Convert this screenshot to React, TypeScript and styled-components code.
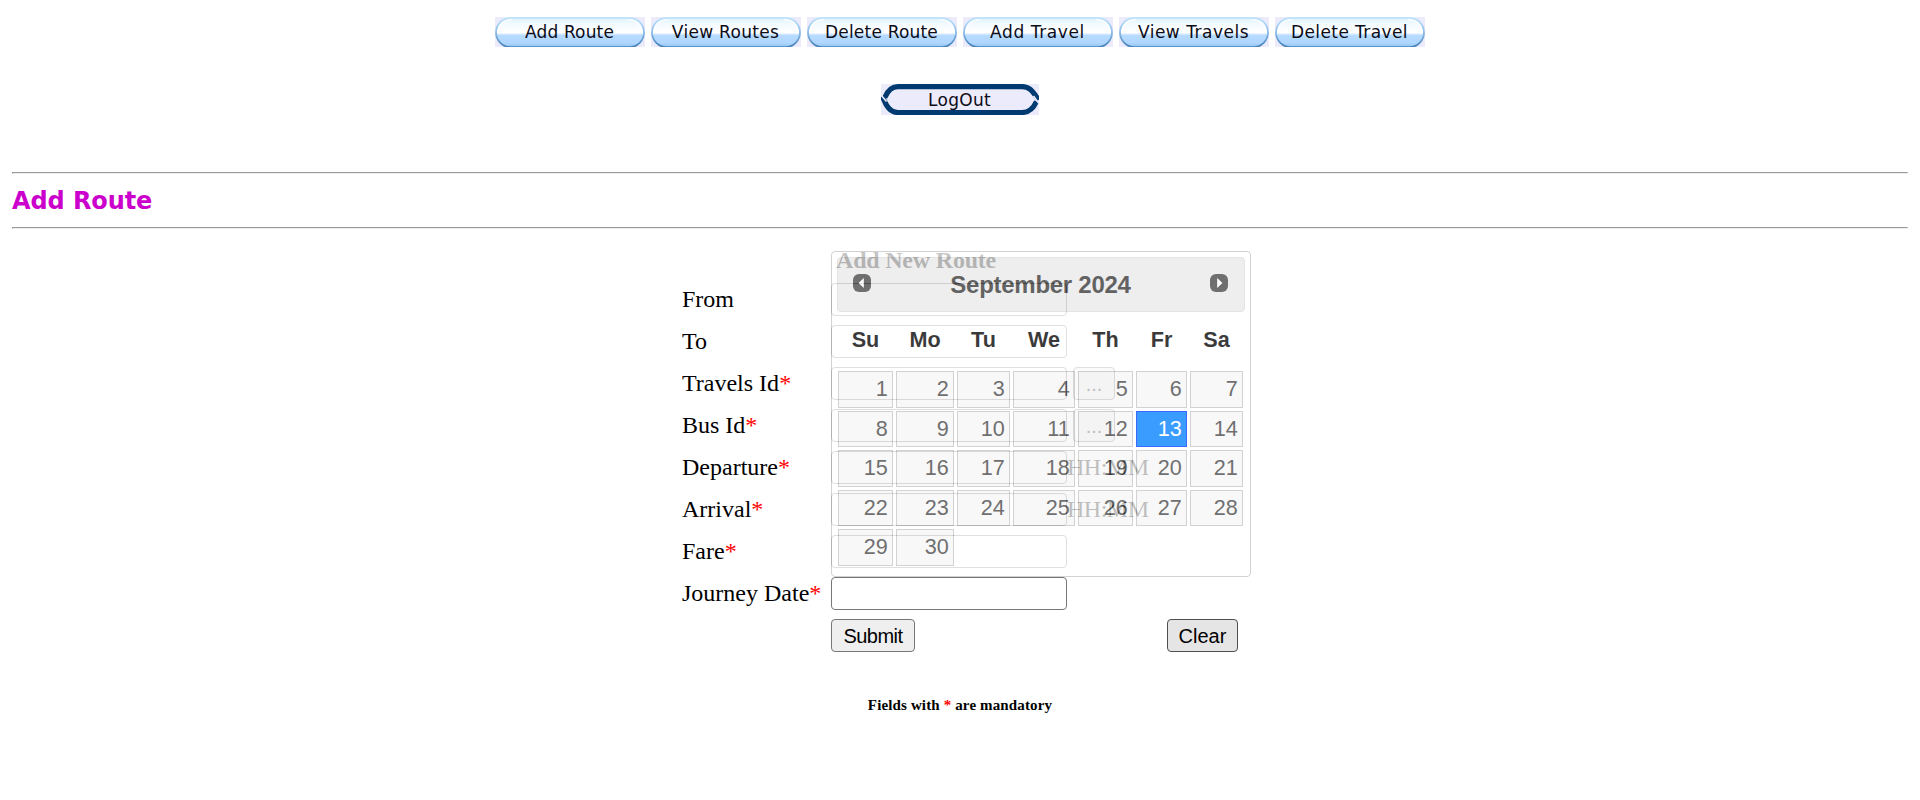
import React from 'react';
import styled, { createGlobalStyle } from 'styled-components';

const GlobalStyle = createGlobalStyle`
  * { box-sizing: border-box; }
  body { margin: 0; background: #fff; color: #000; font: 24px/27px "Liberation Serif", "Times New Roman", serif; }
`;

const Page = styled.main`
  display: flex;
  flex-direction: column;
  height: 800px;
  padding: 17px 12px 0;
  overflow: hidden;
`;

const NavBar = styled.nav`
  display: flex;
  justify-content: center;
  gap: 6px;
`;

const ImageButton = styled.button<{ $w: number; $h: number }>`
  position: relative;
  width: ${p => p.$w}px;
  height: ${p => p.$h}px;
  padding: 0;
  border: 0;
  background: #ecebfb;
  svg { position: absolute; inset: 0; }
`;

const ButtonText = styled.span<{ $spacing?: number }>`
  position: relative;
  display: block;
  padding-right: 1px;
  font: 17px/28px "DejaVu Sans", Verdana, sans-serif;
  letter-spacing: ${p => p.$spacing ?? 0}px;
  color: #0c0c18;
  white-space: nowrap;
`;

const LogoutRow = styled.div`
  display: flex;
  justify-content: center;
  margin: 37px 0 57px;
`;

const Rule = styled.hr`
  width: 100%;
  height: 2px;
  margin: 0;
  border: 1px solid;
  border-color: #9a9a9a #eee #eee #9a9a9a;
`;

const Heading = styled.h1`
  height: 53px;
  margin: 0;
  padding-top: 1px;
  font: bold 24px/53px "DejaVu Sans", Verdana, sans-serif;
  letter-spacing: -0.1px;
  color: #c0c;
`;

const RouteForm = styled.form`
  position: relative;
  display: grid;
  grid-template-columns: 149px 1fr;
  grid-auto-rows: 33px;
  row-gap: 9px;
  width: 556px;
  margin: 12px auto 0;
`;

const FormTitle = styled.div`
  grid-column: 2;
  padding: 6px 0 0 5px;
  font-weight: bold;
  letter-spacing: -0.2px;
`;

const Label = styled.label`
  padding-top: 3px;
  white-space: nowrap;
`;

const Star = styled.span`
  color: red;
`;

const Field = styled.div`
  display: flex;
`;

const TextInput = styled.input`
  width: 236px;
  height: 33px;
  border: 1px solid #767676;
  border-radius: 4px;
  background: #fff;
`;

const FormButton = styled.button<{ $w: number; $hover?: boolean; $spacing?: number }>`
  width: ${p => p.$w}px;
  height: 33px;
  padding: 0;
  border: 1px solid ${p => (p.$hover ? '#4f4f4f' : '#767676')};
  border-radius: 4px;
  background: ${p => (p.$hover ? '#e5e5e5' : '#efefef')};
  font: 20px/30px "Liberation Sans", Arial, sans-serif;
  letter-spacing: ${p => p.$spacing ?? 0}px;
  color: #000;
`;

const LookupButton = styled(FormButton)`
  margin-left: 6px;
`;

const Hint = styled.span`
  padding-top: 3px;
  letter-spacing: -0.5px;
`;

const Actions = styled.div`
  grid-column: 2;
  display: flex;
  justify-content: space-between;
`;

const Note = styled.p`
  margin: 43px 0 0;
  font-size: 15px;
  line-height: 20px;
  font-weight: bold;
  letter-spacing: 0.14px;
  text-align: center;
`;

const Calendar = styled.div`
  position: absolute;
  left: 149px;
  top: 10px;
  width: 420px;
  height: 326px;
  padding: 5px;
  border: 1px solid #c5c5c5;
  border-radius: 4px;
  background: #fff;
  opacity: 0.77;
  font-family: "Liberation Sans", Arial, sans-serif;
`;

const CalendarHeader = styled.div`
  display: flex;
  justify-content: space-between;
  height: 55px;
  padding: 16px 16px 0 15px;
  border: 1px solid #ddd;
  border-radius: 4px;
  background: #e9e9e9;
`;

const MonthTitle = styled.div`
  font-size: 24px;
  line-height: 22px;
  font-weight: bold;
  letter-spacing: -0.27px;
  color: #333;
`;

const columns = '55px 58px 53px 62px 55px 51px 53px';

const WeekHead = styled.div`
  display: grid;
  grid-template-columns: ${columns};
  column-gap: 3px;
  height: 59px;
  padding: 15px 0 0 1px;
  font-size: 21.6px;
  line-height: 26px;
  font-weight: bold;
  text-align: center;
  color: #000;
`;

const Days = styled.div`
  display: grid;
  grid-template-columns: ${columns};
  grid-auto-rows: 36.6px;
  gap: 3px;
  padding-left: 1px;
`;

const Day = styled.div<{ $active: boolean }>`
  padding: 4px 4.3px 0 0;
  border: 1px solid ${p => (p.$active ? '#003eff' : '#c5c5c5')};
  background: ${p => (p.$active ? '#007fff' : '#f6f6f6')};
  color: ${p => (p.$active ? '#fff' : '#454545')};
  font-size: 21.6px;
  line-height: 25px;
  text-align: right;
`;

const GlossyPill = ({ id }: { id: string }) => (
  <svg width="150" height="30" viewBox="0 0 150 30">
    <defs>
      <linearGradient id={`${id}f`} x1="0" y1="0" x2="0" y2="1">
        <stop offset="0" stopColor="#dcf1fd" />
        <stop offset=".2" stopColor="#f2faff" />
        <stop offset=".5" stopColor="#fff" />
        <stop offset=".6" stopColor="#b8dbff" />
        <stop offset=".85" stopColor="#aed6ff" />
        <stop offset="1" stopColor="#94c2f2" />
      </linearGradient>
      <linearGradient id={`${id}s`} x1="0" y1="0" x2="0" y2="1">
        <stop offset="0" stopColor="#bfe4f8" />
        <stop offset=".5" stopColor="#86b9e8" />
        <stop offset="1" stopColor="#4480b8" />
      </linearGradient>
    </defs>
    <rect x="1" y=".8" width="148" height="29.4" rx="14.7" fill={`url(#${id}f)`} stroke={`url(#${id}s)`} strokeWidth="1.7" />
    <path d="M3 15C4 7 9 3 17 2.5M147 15C146 7 141 3 133 2.5" fill="none" stroke="#fff" strokeWidth="1.5" opacity=".7" />
  </svg>
);

const LogoutFrame = () => (
  <svg width="158" height="31" viewBox="0 0 158 31">
    <path d="M3.8 13.5C7 6 11 2.7 17 2.7H141C148 2.7 151 6 157.5 16" fill="none" stroke="#003a70" strokeWidth="5.2" />
    <path d="M1.5 12.5C5 22 9 28.5 17 28.5H141C149 28.5 153 23 155.5 17.5" fill="none" stroke="#003a70" strokeWidth="5.2" />
    <path d="M0 11L5.5 17.5M152.5 12L158 19.5" stroke="#ecebfb" strokeWidth="1.6" />
  </svg>
);

const ArrowIcon = ({ next }: { next?: boolean }) => (
  <svg width="18" height="18" viewBox="0 0 18 18">
    <rect width="18" height="18" rx="6" fill="#444" />
    <path d={next ? 'M7.2 4L12.4 9L7.2 14Z' : 'M10.8 4L5.6 9L10.8 14Z'} fill="#fff" />
  </svg>
);

const navItems: [string, number][] = [
  ['Add Route', 0.15],
  ['View Routes', 0.3],
  ['Delete Route', 0.2],
  ['Add Travel', 0.6],
  ['View Travels', 0.5],
  ['Delete Travel', 0.4],
];

interface FieldSpec {
  label: string;
  required?: boolean;
  lookup?: boolean;
  hint?: string;
}

const fields: FieldSpec[] = [
  { label: 'From' },
  { label: 'To' },
  { label: 'Travels Id', required: true, lookup: true },
  { label: 'Bus Id', required: true, lookup: true },
  { label: 'Departure', required: true, hint: 'HH:MM' },
  { label: 'Arrival', required: true, hint: 'HH:MM' },
  { label: 'Fare', required: true },
  { label: 'Journey Date', required: true },
];

const days = Array.from({ length: 30 }, (_, i) => i + 1);

export default function App() {
  return (
    <Page>
      <GlobalStyle />
      <NavBar>
        {navItems.map(([text, spacing], i) => (
          <ImageButton key={text} $w={150} $h={30}>
            <GlossyPill id={`pill${i}`} />
            <ButtonText $spacing={spacing}>{text}</ButtonText>
          </ImageButton>
        ))}
      </NavBar>
      <LogoutRow>
        <ImageButton $w={158} $h={31}>
          <LogoutFrame />
          <ButtonText $spacing={0.3}>LogOut</ButtonText>
        </ImageButton>
      </LogoutRow>
      <Rule />
      <Heading>Add Route</Heading>
      <Rule />
      <RouteForm>
        <FormTitle>Add New Route</FormTitle>
        {fields.map(f => (
          <React.Fragment key={f.label}>
            <Label>{f.label}{f.required && <Star>*</Star>}</Label>
            <Field>
              <TextInput />
              {f.lookup && <LookupButton type="button" $w={42}>...</LookupButton>}
              {f.hint && <Hint>{f.hint}</Hint>}
            </Field>
          </React.Fragment>
        ))}
        <Actions>
          <FormButton type="button" $w={84} $spacing={-0.5}>Submit</FormButton>
          <FormButton type="reset" $w={71} $hover>Clear</FormButton>
        </Actions>
        <Calendar>
          <CalendarHeader>
            <ArrowIcon />
            <MonthTitle>September 2024</MonthTitle>
            <ArrowIcon next />
          </CalendarHeader>
          <WeekHead>
            {['Su', 'Mo', 'Tu', 'We', 'Th', 'Fr', 'Sa'].map(d => <span key={d}>{d}</span>)}
          </WeekHead>
          <Days>
            {days.map(d => <Day key={d} $active={d === 13}>{d}</Day>)}
          </Days>
        </Calendar>
      </RouteForm>
      <Note>Fields with <Star>*</Star> are mandatory</Note>
    </Page>
  );
}
